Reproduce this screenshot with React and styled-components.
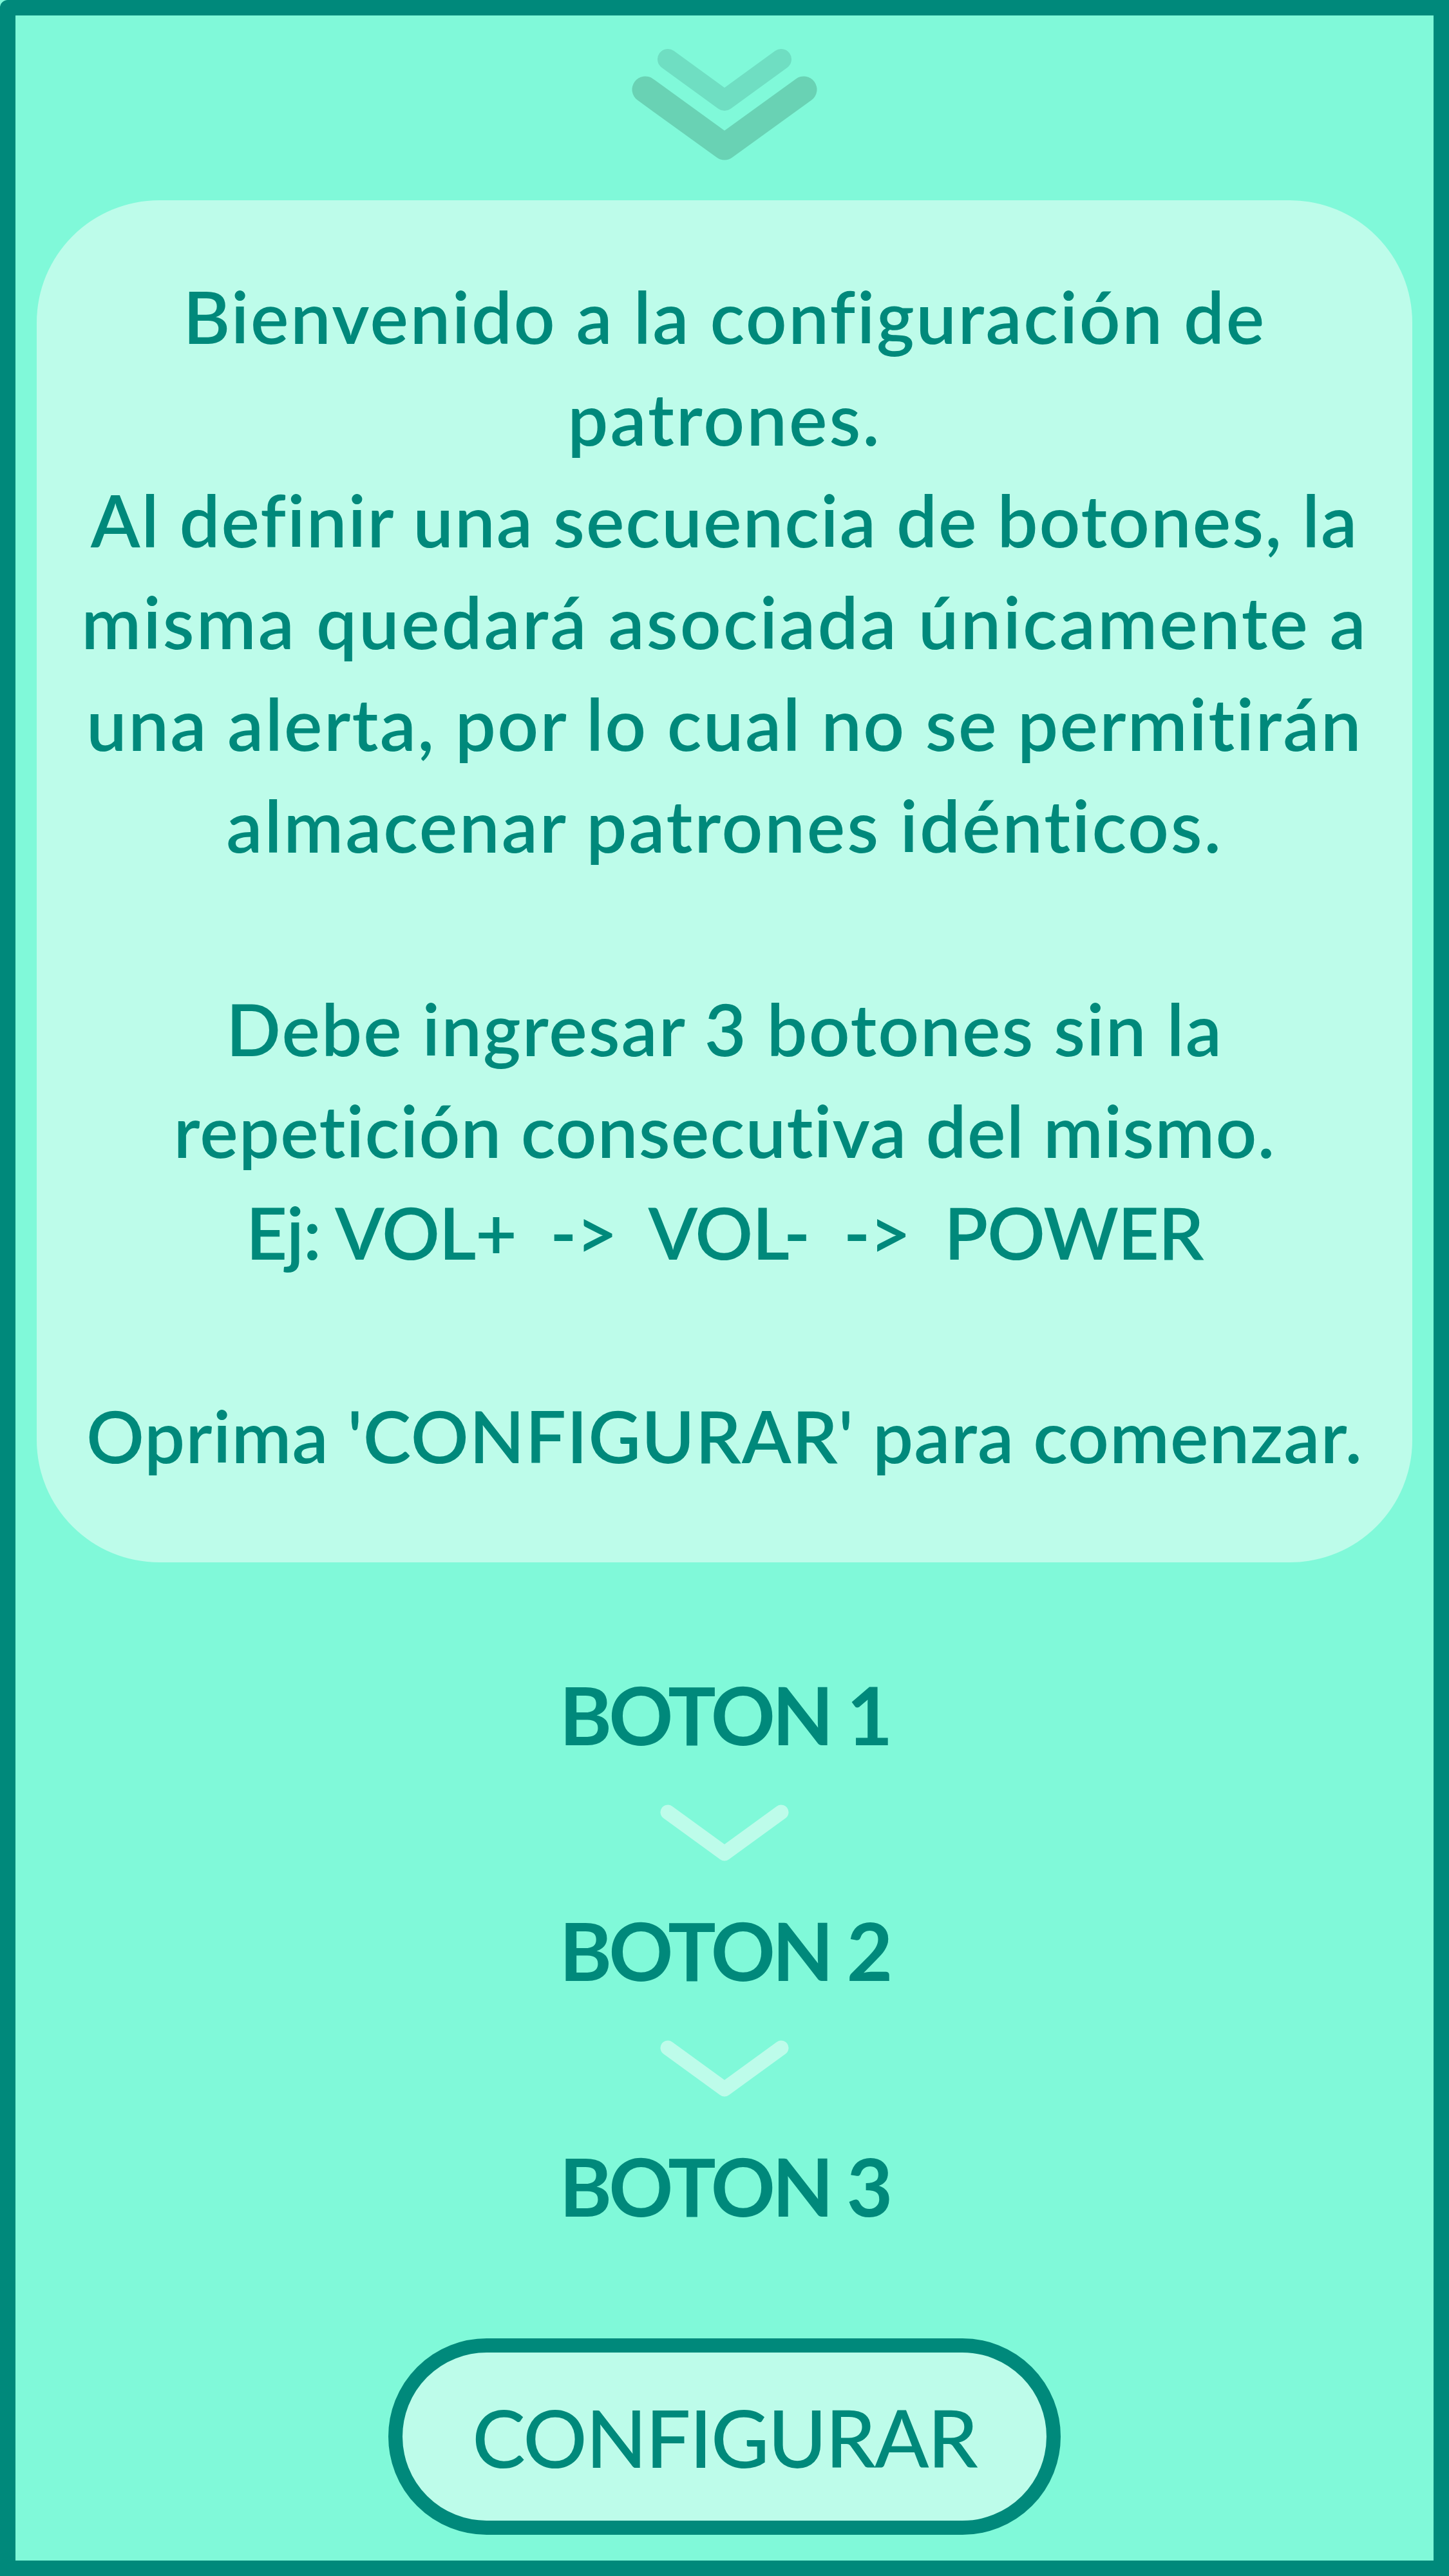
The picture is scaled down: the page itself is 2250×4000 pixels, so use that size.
import React from "react";
import styled, { createGlobalStyle } from "styled-components";

const GlobalStyle = createGlobalStyle`
  html, body {
    margin: 0;
    padding: 0;
    background: #80f9d9;
  }
  * { box-sizing: border-box; }
`;

const TEAL = "#00897b";
const CARD = "#bdfcea";

const Screen = styled.div`
  width: 2250px;
  height: 4000px;
  border: 24px solid ${TEAL};
  border-top-left-radius: 12px;
  background: #80f9d9;
  display: flex;
  flex-direction: column;
  align-items: center;
  font-family: "Lato", "Open Sans", sans-serif;
  font-variant-ligatures: none;
  font-feature-settings: "liga" 0, "clig" 0;
  color: ${TEAL};
`;

const TopChevrons = styled.svg`
  display: block;
  margin-top: 36px;
  flex: none;
`;

const Card = styled.section`
  margin-top: 51px;
  width: 2136px;
  height: 2115px;
  padding: 101px 20px 0;
  background: ${CARD};
  border-radius: 190px;
  flex: none;
  display: flex;
  flex-direction: column;
  align-items: center;
`;

const MessageLine = styled.div`
  white-space: pre;
  text-align: center;
  font-size: 112px;
  font-weight: 600;
  line-height: 158px;
  height: 158px;
  letter-spacing: ${(p) => p.$spacing}px;
`;

const StepLabel = styled.div`
  font-size: 124px;
  font-weight: 700;
  letter-spacing: -5px;
  line-height: 160px;
  height: 160px;
  text-align: center;
  white-space: nowrap;
  margin-top: ${(p) => p.$top}px;
  flex: none;
`;

const StepArrow = styled.svg`
  display: block;
  margin-top: 54px;
  flex: none;
`;

const ConfigureButton = styled.button`
  margin-top: 157px;
  width: 1044px;
  height: 305px;
  border: 22px solid ${TEAL};
  border-radius: 153px;
  background: ${CARD};
  color: ${TEAL};
  font-family: "Lato", "Open Sans", sans-serif;
  font-variant-ligatures: none;
  font-size: 124px;
  font-weight: 500;
  letter-spacing: -2px;
  display: flex;
  align-items: center;
  justify-content: center;
  padding: 0;
  cursor: pointer;
  flex: none;
`;

const lines = [
  ["Bienvenido a la configuración de", 2.5],
  ["patrones.", 3],
  ["Al definir una secuencia de botones, la", 2],
  ["misma quedará asociada únicamente a", 3],
  ["una alerta, por lo cual no se permitirán", 2.3],
  ["almacenar patrones idénticos.", 2.8],
  [" ", 0],
  ["Debe ingresar 3 botones sin la", 2],
  ["repetición consecutiva del mismo.", 1.2],
  ["Ej: VOL+  ->  VOL-  ->  POWER", -1.5],
  [" ", 0],
  ["Oprima 'CONFIGURAR' para comenzar.", 1],
];

function DoubleChevron() {
  return (
    <TopChevrons width="300" height="200" viewBox="0 0 300 200">
      <polyline
        points="62,32 150,96 238,32"
        fill="none"
        stroke="#6fdec2"
        strokeWidth="32"
        strokeLinecap="round"
        strokeLinejoin="round"
      />
      <polyline
        points="27,79 150,168 273,79"
        fill="none"
        stroke="#69d2b4"
        strokeWidth="41"
        strokeLinecap="round"
        strokeLinejoin="round"
      />
    </TopChevrons>
  );
}

function Arrow() {
  return (
    <StepArrow width="200" height="100" viewBox="0 0 200 100">
      <polyline
        points="12,18 100,82 188,18"
        fill="none"
        stroke={CARD}
        strokeWidth="23"
        strokeLinecap="round"
        strokeLinejoin="round"
      />
    </StepArrow>
  );
}

export default function App() {
  return (
    <>
      <GlobalStyle />
      <Screen>
        <DoubleChevron />
        <Card>
          {lines.map(([text, spacing], i) => (
            <MessageLine key={i} $spacing={spacing}>
              {text}
            </MessageLine>
          ))}
        </Card>
        <StepLabel $top={156}>BOTON 1</StepLabel>
        <Arrow />
        <StepLabel $top={52}>BOTON 2</StepLabel>
        <Arrow />
        <StepLabel $top={52}>BOTON 3</StepLabel>
        <ConfigureButton type="button">CONFIGURAR</ConfigureButton>
      </Screen>
    </>
  );
}
